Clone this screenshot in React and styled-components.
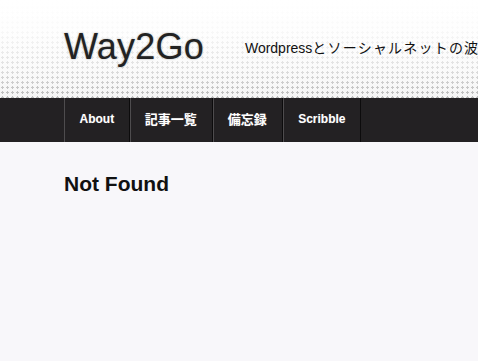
import { createGlobalStyle, styled } from 'styled-components';

const GlobalStyle = createGlobalStyle`
  html, body {
    margin: 0;
    padding: 0;
    background: #f8f7fa;
    font-family: "Liberation Sans", "Noto Sans CJK JP", sans-serif;
  }
`;

const navItems = [
  { label: 'About', cjk: false },
  { label: '記事一覧', cjk: true },
  { label: '備忘録', cjk: true },
  { label: 'Scribble', cjk: false },
];

const App = () => {
  return (
    <Page>
      <GlobalStyle />
      <Header>
        <Logo>Way2Go</Logo>
        <Tagline>
          Wordpress<Jp>とソーシャルネットの波</Jp>
        </Tagline>
      </Header>
      <NavBar>
        <NavList>
          {navItems.map((item) => (
            <NavItem key={item.label} $cjk={item.cjk}>
              {item.label}
            </NavItem>
          ))}
        </NavList>
      </NavBar>
      <Main>
        <Title>Not Found</Title>
      </Main>
    </Page>
  );
};

const Page = styled.div`
  width: 478px;
  height: 361px;
  overflow: hidden;
  background: #f8f7fa;
`;

const Header = styled.header`
  height: 98px;
  box-sizing: border-box;
  display: flex;
  align-items: center;
  gap: 41px;
  padding: 0 0 4px 64px;
  white-space: nowrap;
  overflow: hidden;
  background-color: #f5f5f5;
  background-image: linear-gradient(
      to bottom,
      rgba(255, 255, 255, 1) 0%,
      rgba(255, 255, 255, 0.92) 30%,
      rgba(255, 255, 255, 0.55) 70%,
      rgba(255, 255, 255, 0) 100%
    ),
    radial-gradient(circle, #b8b8b8 1.1px, transparent 1.4px);
  background-size: 100% 100%, 5px 5px;
`;

const Logo = styled.h1`
  margin: 0;
  font-size: 36px;
  font-weight: normal;
  color: #222;
  letter-spacing: 0.2px;
  text-shadow: 0 0 2px rgba(0, 0, 0, 0.35);
`;

const Tagline = styled.p`
  margin: 0;
  font-size: 14px;
  color: #111;
`;

const Jp = styled.span`
  letter-spacing: 1.2px;
`;

const NavBar = styled.nav`
  height: 44px;
  background: #232123;
  padding-left: 64px;
`;

const NavList = styled.ul`
  display: flex;
  height: 100%;
  margin: 0;
  padding: 0;
  list-style: none;
`;

const NavItem = styled.li`
  display: flex;
  align-items: center;
  padding: ${({ $cjk }) => ($cjk ? '0 15px 3px 14px' : '0 14.5px 3px')};
  border-left: 1px solid #4e4c4e;
  border-right: 1px solid #0c0b0c;
  color: #fff;
  font-size: ${({ $cjk }) => ($cjk ? '13px' : '12px')};
  font-weight: bold;
  text-shadow: 0 0 1px rgba(255, 255, 255, 0.3);
`;

const Main = styled.main`
  padding: 30px 0 0 64px;
`;

const Title = styled.h2`
  margin: 0;
  font-size: 21px;
  font-weight: bold;
  color: #111;
`;

export default App;
